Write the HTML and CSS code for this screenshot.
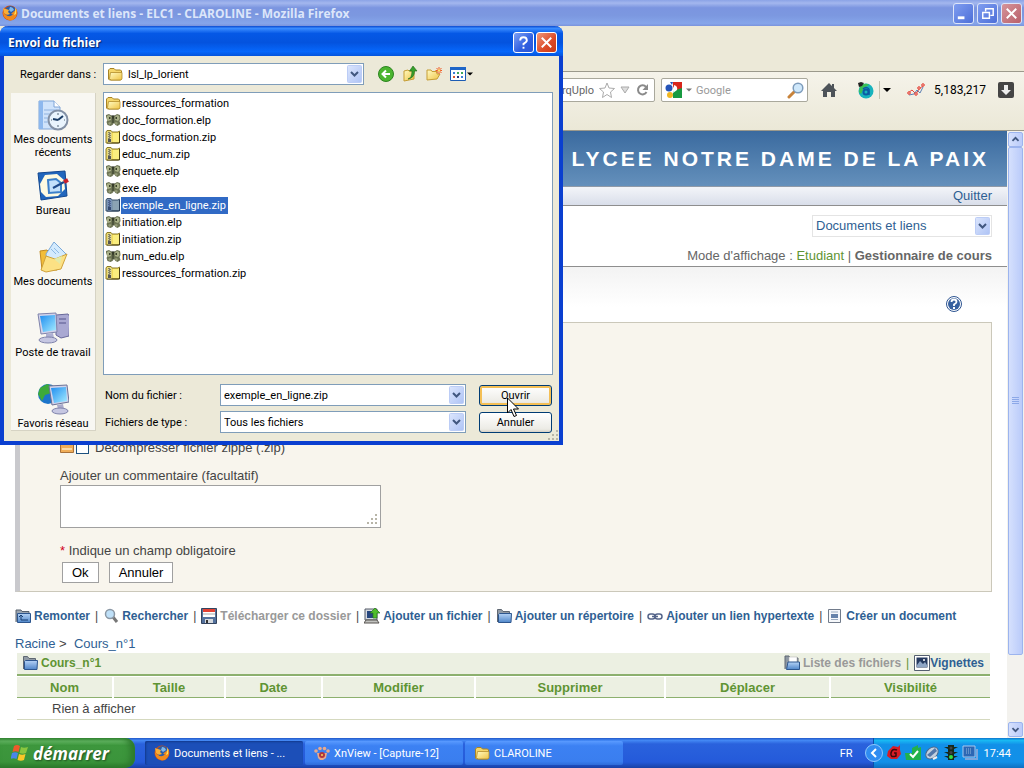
FILE: index.html
```html
<!DOCTYPE html>
<html lang="fr">
<head>
    <meta charset="UTF-8">
    <meta name="viewport" content="width=device-width, initial-scale=1.0">
    <title>Documents et liens - ELC1 - CLAROLINE</title>
    <link rel="stylesheet" href="styles.css">
</head>
<body>

    <!-- Shared icons -->
    <svg class="sprite" width="0" height="0" aria-hidden="true">
        <defs>
            <linearGradient id="gBlue" x1="0" y1="0" x2="0" y2="1"><stop offset="0" stop-color="#b5d3f6"/><stop offset="1" stop-color="#4f86c9"/></linearGradient>
            <linearGradient id="gYellow" x1="0" y1="0" x2="1" y2="1"><stop offset="0" stop-color="#fffbc4"/><stop offset="1" stop-color="#efc343"/></linearGradient>
            <linearGradient id="gScreen" x1="0" y1="0" x2="1" y2="1"><stop offset="0" stop-color="#1f8df0"/><stop offset="1" stop-color="#a5ecff"/></linearGradient>
            <linearGradient id="gArrow" x1="0" y1="0" x2="1" y2="1"><stop offset="0" stop-color="#dce6fd"/><stop offset="1" stop-color="#aec3f5"/></linearGradient>
            <symbol id="firefox" viewBox="0 0 16 16">
                <circle cx="8" cy="8" r="7.500" fill="#c9501a"/>
                <circle cx="8.500" cy="6.500" r="5.500" fill="#2a5ca8"/>
                <path d="M8 2q3 0 4 3l-3 2-2-2z" fill="#7db8ec"/>
                <path d="M1 4q0 5 3 6 4 3 7-1l-2 0 2-2 4-3q1 11-7 11.500-8-1-7-11.500z" fill="#f08a1c"/>
                <path d="M1 3q2 1 3 1l3 1-1 2 2 2q-4 2-6-1z" fill="#f9ae36"/>
                <path d="M13 2q2 3 1 7l-2 1q2-4 1-8z" fill="#ffe25a"/>
            </symbol>
            <symbol id="folder" viewBox="0 0 16 16">
                <path d="M1.500 13V4l1.500-1.500h4L8.500 4h5L14.500 5v8l-1 1h-11z" fill="#f5d66a" stroke="#a88425"/>
                <path d="M3.500 6.500h11.500v6L14 14H4L2.500 12.500z" fill="url(#gYellow)" stroke="#b28d2b" stroke-width=".8"/>
            </symbol>
            <symbol id="zip" viewBox="0 0 16 16">
                <path d="M1 3l1-1.500h4L7 3h6l1.500-1v11l-1 1H1z" fill="#f3dc5c" stroke="#8b7b29"/>
                <path d="M8 4h6v9H8z" fill="#fbee7e"/>
                <path d="M14.500 3v11H2" fill="none" stroke="#463e16"/>
                <path d="M2.500 2.500h4v11h-4z" fill="#d9d49a"/>
                <path d="M4 3v10" stroke="#333" stroke-dasharray="1 1"/>
                <path d="M5 4v9" stroke="#333" stroke-dasharray="1 1"/>
                <path d="M3 10h3v3H3z" fill="#555"/>
            </symbol>
            <symbol id="zip-on" viewBox="0 0 16 16">
                <path d="M1 3l1-1.500h4L7 3h6l1.500-1v11l-1 1H1z" fill="#7c96ac" stroke="#41566e"/>
                <path d="M8 4h6v9H8z" fill="#8ba3b4"/>
                <path d="M14.500 3v11H2" fill="none" stroke="#233751"/>
                <path d="M2.500 2.500h4v11h-4z" fill="#7690bd"/>
                <path d="M4 3v10" stroke="#26395f" stroke-dasharray="1 1"/>
                <path d="M5 4v9" stroke="#26395f" stroke-dasharray="1 1"/>
                <path d="M3 10h3v3H3z" fill="#344a72"/>
            </symbol>
            <symbol id="elp" viewBox="0 0 16 16">
                <path d="M1 3l3-1 3 2h2l3-2 3 1 .500 4-1 2 1 3-3 2-2-1-1.500-2-1.500 2-2 1-3-1-1-3 1-2-1.500-3z" fill="#6d7454"/>
                <path d="M2 4l2-1 2.500 2-.5 3-3 1-1.500-2zM14 4l-2-1-2.500 2 .5 3 3 1 1.500-2z" fill="#a9b087"/>
                <path d="M3 11l2-1 1.500 1-2 2zM13 11l-2-1-1.500 1 2 2z" fill="#979e78"/>
                <path d="M4 5h1.500v2H4zM10.500 5H12v2h-1.500z" fill="#3c422c"/>
                <path d="M7 3l1 4 1-4M8 7v4" stroke="#2f3424" fill="none"/>
            </symbol>
            <symbol id="chevron" viewBox="0 0 15 18">
                <rect x=".5" y=".5" width="14" height="17" rx="1" fill="url(#gArrow)" stroke="#bccdf6"/>
                <path d="M4 7l3.500 3.500L11 7" fill="none" stroke="#41577f" stroke-width="2"/>
            </symbol>
            <symbol id="caret" viewBox="0 0 8 8"><path d="M0 2h8L4 6z"/></symbol>
            <symbol id="dir" viewBox="0 0 16 16">
                <path d="M1.500 14V1.500h4L7 3.500h6.500v3" fill="#909aa5" stroke="#5e6772"/>
                <path d="M2.500 14.500v-8l1-1h12l-.5 9z" fill="url(#gBlue)" stroke="#2d568e"/>
            </symbol>
        </defs>
    </svg>

    <!-- Browser window -->
    <header class="titlebar">
        <svg class="icon16"><use href="#firefox"/></svg>
        <h1>Documents et liens - ELC1 - CLAROLINE - Mozilla Firefox</h1>
        <button class="win-btn" aria-label="Réduire"><svg viewBox="0 0 20 20"><path d="M4 13h7v3H4z" fill="#fff"/></svg></button>
        <button class="win-btn" aria-label="Restaurer"><svg viewBox="0 0 20 20"><path d="M8 8V5h8v7h-3" fill="none" stroke="#fff" stroke-width="1.500"/><path d="M5 9h7v6H5z" fill="none" stroke="#fff" stroke-width="1.500"/></svg></button>
        <button class="win-btn win-close" aria-label="Fermer"><svg viewBox="0 0 20 20"><path d="M5 5l10 10M15 5L5 15" stroke="#fff" stroke-width="2"/></svg></button>
    </header>

    <div class="menu-area"></div>

    <nav class="browser-bar">
        <div class="field url-field">
            <input type="text" aria-label="Adresse" value="rqUplo">
            <svg width="16" height="16" viewBox="0 0 16 16"><path d="M8 1l2 5 5.500.500-4 3.500 1 5.500L8 12.500l-4.500 3 1-5.500-4-3.500L6 6z" fill="#fff" stroke="#aaa"/></svg>
            <svg width="10" height="16" viewBox="0 0 10 16"><path d="M1 5h8l-4 6z" fill="#ddd" stroke="#aaa"/></svg>
            <svg width="14" height="16" viewBox="0 0 14 16"><path d="M11 5a4.500 4.500 0 1 0 .500 5" fill="none" stroke="#8a8a8a" stroke-width="2"/><path d="M13 2v6H7.500z" fill="#8a8a8a"/></svg>
        </div>
        <div class="field search-field">
            <svg width="17" height="16" viewBox="0 0 17 16"><path d="M0 0h8v16H0z" fill="#fff"/><path d="M8 0h9v7l-4 2-5-4z" fill="#d8261c"/><path d="M8 9l9-3v10H8z" fill="#179a40"/><path d="M9 3q4 1 3 5l-4 3z" fill="#fff"/><circle cx="4" cy="6" r="3.500" fill="#2554b8"/><circle cx="5" cy="13" r="3" fill="#f0b621"/><path d="M5 0h3L7 3z" fill="#2554b8"/></svg>
            <svg class="caret" width="6" height="6" fill="#777"><use href="#caret"/></svg>
            <input type="text" aria-label="Recherche" placeholder="Google">
            <svg width="17" height="17" viewBox="0 0 17 17"><path d="M7 10l-5 5" stroke="#c8833a" stroke-width="3" stroke-linecap="round"/><circle cx="11" cy="6" r="4.800" fill="#cfe8fb" stroke="#7e9cbb" stroke-width="1.500"/></svg>
        </div>
        <button class="flat home" aria-label="Accueil"><svg width="16" height="16" viewBox="0 0 16 16"><path d="M8 1L0 9h2v6h4v-5h4v5h4V9h2l-3-3V2h-2v2z" fill="#4d5359"/></svg></button>
        <button class="flat" aria-label="Alexa"><svg width="18" height="18" viewBox="0 0 18 18"><circle cx="10" cy="10" r="7.500" fill="#18b3bd"/><path d="M4 5q6-4 9-1l-5 3-3 6-2-2z" fill="#3cc054"/><path d="M2 2l3-1 3 1-2 3-3 1z" fill="#222"/><circle cx="10" cy="11" r="2.500" fill="none" stroke="#0c5ba4" stroke-width="2"/><path d="M13 8v6M7 8q3-3 6 0" fill="none" stroke="#0c5ba4" stroke-width="1.500"/></svg></button>
        <span class="bar-sep"></span>
        <svg class="caret" width="8" height="8"><use href="#caret"/></svg>
        <svg class="graph" width="18" height="14" viewBox="0 0 18 14"><path d="M1 10l4-3 4 4 3-5 5-4" fill="none" stroke="#e2473c"/><path d="M2 12l5-1 3-4 3 3 3-6" fill="none" stroke="#5d7fb2"/><g fill="#f9b4ac" stroke="#e2473c"><circle cx="2" cy="10" r="1.300"/><circle cx="9" cy="11" r="1.300"/><circle cx="12" cy="5" r="1.300"/><circle cx="16" cy="2" r="1.300"/></g></svg>
        <span class="rank">5,183,217</span>
        <button class="flat" aria-label="Téléchargements"><svg width="16" height="16" viewBox="0 0 16 16"><rect width="16" height="16" rx="2" fill="#454545"/><path d="M6 3h4v5h3l-5 5-5-5h3z" fill="#eee"/></svg></button>
    </nav>

    <div class="viewport">
        <main class="page">
            <div class="banner">LYCEE NOTRE DAME DE LA PAIX</div>
            <div class="user-bar"><a href="#">Quitter</a></div>

            <div class="course-bar">
                <div class="combo tool-select">
                    <select aria-label="Outil"><option>Documents et liens</option></select>
                    <svg class="arrow"><use href="#chevron"/></svg>
                </div>
                <p>Mode d'affichage : <a class="student" href="#">Etudiant</a> | <strong>Gestionnaire de cours</strong></p>
            </div>

            <div class="content">
                <a class="help" href="#" aria-label="Aide"><svg width="16" height="16" viewBox="0 0 16 16"><circle cx="8" cy="8" r="7.500" fill="#fff" stroke="#2d5491"/><circle cx="8" cy="8" r="6" fill="#38619f"/><path d="M5.500 6q0-2.500 2.500-2.500T10.500 6Q10.500 7 8 8.500V10" fill="none" stroke="#fff" stroke-width="1.800"/><path d="M7 11h2v2H7z" fill="#fff"/></svg></a>

                <form class="upload">
                    <div class="unzip">
                        <svg width="14" height="14" viewBox="0 0 14 14"><path d="M.5.500h13v12H.5z" fill="#f0ad58" stroke="#a8713a"/><path d="M2 8h10v2H2z" fill="#fbd9a4"/></svg>
                        <input type="checkbox" id="unzip">
                        <label for="unzip">Décompresser fichier zippé (.zip)</label>
                    </div>
                    <label class="comment-label" for="comment">Ajouter un commentaire (facultatif)</label>
                    <div class="comment-box">
                        <textarea id="comment"></textarea>
                        <svg class="grip" width="12" height="12" viewBox="0 0 12 12"><path d="M9 1h2v2H9zM5 5h2v2H5zM9 5h2v2H9zM1 9h2v2H1zM5 9h2v2H5zM9 9h2v2H9z"/></svg>
                    </div>
                    <p class="required"><span>*</span> Indique un champ obligatoire</p>
                    <div class="form-buttons">
                        <button type="submit">Ok</button>
                        <button type="button">Annuler</button>
                    </div>
                </form>

                <ul class="commands">
                    <li><a href="#"><svg class="icon16" viewBox="0 0 16 16"><path d="M1 14V2h5l1 1.500h7V6" fill="#9aa5b1" stroke="#56606c"/><path d="M2.500 14.500v-9h13v9z" fill="url(#gBlue)" stroke="#2d568e"/><path d="M6 7v5h7M4 9l2-2 2 2" fill="none" stroke="#173d70"/></svg>Remonter</a></li>
                    <li><a href="#"><svg class="icon16" viewBox="0 0 16 16"><path d="M10 9l4 5" stroke="#777" stroke-width="3"/><circle cx="7" cy="6" r="4.500" fill="#bfe0f8" stroke="#8b98a5" stroke-width="1.500"/></svg>Rechercher</a></li>
                    <li><a class="disabled"><svg class="icon16" viewBox="0 0 16 16"><path d="M.5.500h15v15H.5z" fill="#53719d" stroke="#34445e"/><path d="M2 1h12v8H2z" fill="#fff"/><path d="M2 1h12v3H2z" fill="#e34234"/><path d="M2 6h12" stroke="#aaa"/><path d="M4 11h8v4H4z" fill="#d5d9de"/><path d="M5 12h2v3H5z" fill="#333"/></svg>Télécharger ce dossier</a></li>
                    <li><a href="#"><svg class="icon16" viewBox="0 0 16 16"><path d="M1 1h12v11H1z" fill="#d7dae2" stroke="#555b66"/><path d="M3 3h8v7H3z" fill="#27477f"/><path d="M0 15l2-3h11l2 3z" fill="#c1c2bf" stroke="#56534e"/><path d="M11 0l5 5h-3v5H9V5H6z" fill="#50bd2b" stroke="#25751b" stroke-width=".7"/></svg>Ajouter un fichier</a></li>
                    <li><a href="#"><svg class="icon16"><use href="#dir"/></svg>Ajouter un répertoire</a></li>
                    <li><a href="#"><svg class="icon16" viewBox="0 0 16 16"><g fill="none" stroke="#55658a" stroke-width="1.500"><rect x="1" y="6" width="7" height="5" rx="2.500"/><rect x="8" y="6" width="7" height="5" rx="2.500"/><path d="M5 8.500h6"/></g></svg>Ajouter un lien hypertexte</a></li>
                    <li><a href="#"><svg class="icon16" viewBox="0 0 16 16"><path d="M1.500 1.500h12v13h-12z" fill="#f6f8fb" stroke="#717b8b"/><path d="M4 4h7M4 11.500h7" stroke="#9cacc0"/><path d="M4 6h7v4H4z" fill="#6783aa"/></svg>Créer un document</a></li>
                </ul>

                <div class="crumbs"><a href="#">Racine</a> &gt; &nbsp;<a href="#">Cours_n°1</a></div>

                <div class="dir-head">
                    <svg class="icon16"><use href="#dir"/></svg>
                    <h2>Cours_n°1</h2>
                    <svg class="icon16" viewBox="0 0 16 16"><path d="M1 14V1h4l1 2h8v4" fill="#8d97a2" stroke="#5e6772"/><path d="M5 2h8v6H5z" fill="#fff" stroke="#aaa" stroke-width=".5"/><path d="M2.500 14.500L4 7h11.500v7.500z" fill="url(#gBlue)" stroke="#2d568e"/></svg>
                    <span class="disabled">Liste des fichiers</span>
                    <span class="pipe">|</span>
                    <a href="#"><svg class="icon16" viewBox="0 0 16 16"><path d="M.5.500h15v15H.5z" fill="#fff" stroke="#555f70"/><path d="M2.500 2.500h11v10h-11z" fill="#25395f"/><path d="M3 10l3-4 3 3 2-2 2 3v2H3z" fill="#8ea5c5"/><circle cx="10" cy="5" r="1" fill="#fff"/></svg>Vignettes</a>
                </div>
                <table class="files">
                    <colgroup><col class="c-name"><col class="c-size"><col class="c-date"><col class="c-edit"><col class="c-del"><col class="c-move"><col></colgroup>
                    <thead>
                        <tr><th>Nom</th><th>Taille</th><th>Date</th><th>Modifier</th><th>Supprimer</th><th>Déplacer</th><th>Visibilité</th></tr>
                    </thead>
                    <tbody>
                        <tr><td colspan="7">Rien à afficher</td></tr>
                    </tbody>
                </table>
            </div>
        </main>
        <div class="scrollbar">
            <button aria-label="Haut"><svg viewBox="0 0 15 15"><path d="M4 9l3.500-3.500L11 9" fill="none" stroke="#41577f" stroke-width="2"/></svg></button>
            <div class="thumb"><svg width="7" height="8" viewBox="0 0 7 8"><path d="M0 .5h7M0 2.500h7M0 4.500h7M0 6.500h7" stroke="#8ca8e8"/></svg></div>
            <div class="track"></div>
            <button aria-label="Bas"><svg viewBox="0 0 15 15"><path d="M4 6l3.500 3.500L11 6" fill="none" stroke="#41577f" stroke-width="2"/></svg></button>
        </div>
    </div>

    <!-- Taskbar -->
    <footer class="taskbar">
        <button class="start"><svg width="18" height="18" viewBox="0 0 18 18"><path d="M3 2q3-2 6 0L7.500 8q-3-1.500-6 0z" fill="#ee5a2b"/><path d="M10 3q3 1.500 7 0l-2 6q-3 1.500-6.500 0z" fill="#8ac63f"/><path d="M1 9q3-1.500 6 0l-1.500 6q-3-1.500-6 0z" fill="#4a86ea"/><path d="M8 10q3 1.500 6.500 0L13 16q-3 1.500-6.500 0z" fill="#fbc728"/></svg>démarrer</button>
        <button class="task active"><svg class="icon16"><use href="#firefox"/></svg>Documents et liens - ...</button>
        <button class="task"><svg class="icon16" viewBox="0 0 16 16"><g fill="#e8a98c"><circle cx="2" cy="6" r="1.800"/><circle cx="6" cy="3.500" r="1.800"/><circle cx="10.500" cy="3.500" r="1.800"/><circle cx="14" cy="6" r="1.800"/><path d="M3 8h10l-1 5-3 2H6l-2-2z"/></g><circle cx="8" cy="10" r="3" fill="#b1373d"/><circle cx="8" cy="10" r="1" fill="#f5d45c"/></svg>XnView - [Capture-12]</button>
        <button class="task"><svg class="icon16"><use href="#folder"/></svg>CLAROLINE</button>
        <span class="lang">FR</span>
        <div class="tray">
            <button class="flat expand" aria-label="Afficher les icônes"><svg width="18" height="18" viewBox="0 0 18 18"><circle cx="9" cy="9" r="8.500" fill="#2f8cf1" stroke="#8fc8fb"/><path d="M11 5L7 9l4 4" fill="none" stroke="#fff" stroke-width="2"/></svg></button>
            <svg class="icon16" viewBox="0 0 16 16"><path d="M2 6l5-5 5 1 2-2v5l1 4-4 5H5l-4-3z" fill="#d71c24"/><path d="M11 5q-5-2-6 3t5 3v-3H8" fill="none" stroke="#3b0a0c" stroke-width="1.500"/></svg>
            <svg class="icon16" viewBox="0 0 16 16"><path d="M0 8h7V3l6-3v3l3-1v13H1z" fill="#22b14c"/><path d="M5 9l3 3 5-6" fill="none" stroke="#fff" stroke-width="2"/></svg>
            <svg class="icon16" viewBox="0 0 16 16"><ellipse cx="8" cy="8" rx="7" ry="5" transform="rotate(-40 8 8)" fill="#c3d1df" stroke="#4b678b"/><path d="M3 10l8-7 2 3-7 6z" fill="#5277a9"/><path d="M9 14l4-2" stroke="#eee" stroke-width="2"/></svg>
            <svg class="icon16" viewBox="0 0 16 16"><path d="M5 0h6v15H5zM1 2h4v2zM1 7h4v2zM1 11h4v2zM15 2h-4v2zM15 7h-4v2zM15 11h-4v2z" fill="#16291b"/><circle cx="8" cy="3" r="1.500" fill="#444"/><circle cx="8" cy="7.500" r="1.500" fill="#444"/><circle cx="8" cy="12" r="2" fill="#35e243"/></svg>
            <svg class="icon16" viewBox="0 0 16 16"><path d="M1 1h12v11H1z" fill="#2c67b4" stroke="#a7c8ee"/><path d="M3 14h12V4" fill="none" stroke="#7ba6dc" stroke-width="2"/><path d="M4 4h6M4 6h6M4 8h6" stroke="#9bd" stroke-dasharray="1 1"/></svg>
            <span class="clock">17:44</span>
        </div>
    </footer>

    <!-- File dialog -->
    <div class="dialog" role="dialog" aria-labelledby="dialogTitle">
        <div class="dialog-title">
            <h2 id="dialogTitle">Envoi du fichier</h2>
            <button class="win-btn" aria-label="Aide"><svg viewBox="0 0 20 20"><path d="M6.500 8q0-3.500 3.500-3.500T13.500 8q0 1.500-3.500 3.500V13" fill="none" stroke="#fff" stroke-width="2"/><path d="M9 14.500h2v2H9z" fill="#fff"/></svg></button>
            <button class="win-btn win-close" aria-label="Fermer"><svg viewBox="0 0 20 20"><path d="M5 5l10 10M15 5L5 15" stroke="#fff" stroke-width="2"/></svg></button>
        </div>
        <div class="dialog-body">
            <div class="look-in">
                <label for="lookIn">Regarder dans :</label>
                <div class="combo">
                    <svg class="icon16"><use href="#folder"/></svg>
                    <select id="lookIn"><option>lsl_lp_lorient</option></select>
                    <svg class="arrow"><use href="#chevron"/></svg>
                </div>
                <button class="flat" aria-label="Précédent"><svg class="icon16" viewBox="0 0 16 16"><circle cx="8" cy="8" r="7.500" fill="#4bb52f" stroke="#2c8420"/><path d="M12 8H5M8 4.500L4.500 8 8 11.500" fill="none" stroke="#fff" stroke-width="2"/></svg></button>
                <button class="flat" aria-label="Dossier parent"><svg class="icon16" viewBox="0 0 16 16"><path d="M2 15V5l4-1 1 1h5v8z" fill="url(#gYellow)" stroke="#c59d35"/><path d="M6 13q4-1 4-8H7.500L11 0l4 5h-2.500q0 7-6.500 8z" fill="#37a02c" stroke="#1c6a18" stroke-width=".6"/></svg></button>
                <button class="flat" aria-label="Nouveau dossier"><svg class="icon16" viewBox="0 0 16 16"><path d="M1 14V4h4l1 1.500h5V8h3l-3 5z" fill="url(#gYellow)" stroke="#c59d35"/><path d="M13 1v7M9.500 4.500h7M10.500 2l5 5M15.500 2l-5 5" stroke="#ef5a27"/><circle cx="13" cy="4.500" r="1.200" fill="#ffe36a"/></svg></button>
                <button class="flat view" aria-label="Affichage"><svg class="icon16" viewBox="0 0 16 16"><path d="M.5 1.500h15v13H.5z" fill="#fff" stroke="#1c5cb4"/><path d="M0 1h16v3H0z" fill="#1f66c8"/><path d="M3 6h2v2H3zM11 10h2v2h-2z" fill="#3c7fd6"/><path d="M7 6h2v2H7zM11 6h2v2h-2z" fill="#3fa75a"/><path d="M3 10h2v2H3z" fill="#d7562e"/><path d="M7 10h2v2H7z" fill="#26357d"/></svg><svg width="6" height="6"><use href="#caret"/></svg></button>
            </div>

            <div class="dialog-main">
                <ul class="places">
                    <li><svg viewBox="0 0 32 32"><path d="M2 2h15l6 6v22H2z" fill="#cfe3fb" stroke="#7ea4d6"/><path d="M2 2h4v28H2z" fill="#8db8ee"/><path d="M17 2v6h6" fill="#fff" stroke="#7ea4d6"/><path d="M7 11h13M7 15h10M7 19h7M7 23h7" stroke="#8fb2df"/><circle cx="21" cy="21" r="9.500" fill="#e9f4fd" stroke="#8290a5" stroke-width="2"/><path d="M21 21l5-4M21 21l-5-1" stroke="#1b3d66" stroke-width="2"/><path d="M21 14v2M21 26v2M14 21h1M27 21h1" stroke="#567"/></svg><span>Mes documents récents</span></li>
                    <li><svg viewBox="0 0 32 32"><path d="M1 3l27-2 2 25-26 4z" fill="#2166bd" stroke="#12478f"/><path d="M3 14l5-9 12-1 7 6 1 9-7 7-12 1-5-5z" fill="#fffbe1"/><path d="M11 10l8-1 5 4v9l-12 1z" fill="#c3e1fb" stroke="#3c80ca" stroke-width="2"/><path d="M16 18l11-6" stroke="#1e4a8a" stroke-width="2"/><path d="M27 12l4-2" stroke="#c8202a" stroke-width="4"/></svg><span>Bureau</span></li>
                    <li><svg viewBox="0 0 32 32"><path d="M3 10l7-1 2 2 15 1-7 17H5z" fill="#f2bd38" stroke="#c08a22"/><path d="M9 13L17 1l12 12-9 9H10z" fill="#d3eafd" stroke="#79a8d9"/><path d="M14 8l5 5M17 7l5 5" stroke="#8dbbe6"/><path d="M4 29l5-14 9 3 12-5-6 15-15 3z" fill="#fce184" stroke="#cfa13a"/><path d="M17 18l8-3-2 8z" fill="#e3eaa9"/></svg><span>Mes documents</span></li>
                    <li><svg viewBox="0 0 32 32"><path d="M19 3l12-1 2 3-1 19-8 2-5-3z" fill="#a9a8d2" stroke="#68689a"/><path d="M22 7h7M22 11h7" stroke="#55558c"/><path d="M1 2l18-1 1 19-16 2z" fill="#d2d3eb" stroke="#7f83ab"/><path d="M3 4l15-1 1 15-13 2z" fill="url(#gScreen)"/><path d="M9 22l7-1 1 5H9z" fill="#aeb0d2"/><ellipse cx="11" cy="28" rx="9" ry="3" fill="#c6c7e2" stroke="#7f83ab"/></svg><span>Poste de travail</span></li>
                    <li><svg viewBox="0 0 32 32"><circle cx="11" cy="11" r="10" fill="#1c75cb"/><path d="M3 5l7-4 7 3-3 6-6 2-3 6-4-7z" fill="#3daa3b"/><path d="M12 3l18-1 2 17-17 3z" fill="#d2d3eb" stroke="#6c7195"/><path d="M14 5l15-1 1 14-13 2z" fill="url(#gScreen)"/><path d="M20 22l6-1 1 5h-6z" fill="#a9aacb"/><ellipse cx="23" cy="28" rx="8" ry="3" fill="#c6c7e2" stroke="#7f83ab"/></svg><span>Favoris réseau</span></li>
                </ul>

                <div class="dialog-right">
                    <ul class="file-list">
                        <li><svg class="icon16"><use href="#folder"/></svg><span>ressources_formation</span></li>
                        <li><svg class="icon16"><use href="#elp"/></svg><span>doc_formation.elp</span></li>
                        <li><svg class="icon16"><use href="#zip"/></svg><span>docs_formation.zip</span></li>
                        <li><svg class="icon16"><use href="#zip"/></svg><span>educ_num.zip</span></li>
                        <li><svg class="icon16"><use href="#elp"/></svg><span>enquete.elp</span></li>
                        <li><svg class="icon16"><use href="#elp"/></svg><span>exe.elp</span></li>
                        <li class="selected"><svg class="icon16"><use href="#zip-on"/></svg><span>exemple_en_ligne.zip</span></li>
                        <li><svg class="icon16"><use href="#elp"/></svg><span>initiation.elp</span></li>
                        <li><svg class="icon16"><use href="#zip"/></svg><span>initiation.zip</span></li>
                        <li><svg class="icon16"><use href="#elp"/></svg><span>num_edu.elp</span></li>
                        <li><svg class="icon16"><use href="#zip"/></svg><span>ressources_formation.zip</span></li>
                    </ul>
                    <div class="dialog-fields">
                        <label for="fileName">Nom du fichier :</label>
                        <div class="combo">
                            <input type="text" id="fileName" value="exemple_en_ligne.zip">
                            <svg class="arrow"><use href="#chevron"/></svg>
                        </div>
                        <button class="xp-btn default">Ouvrir</button>
                        <label for="fileType">Fichiers de type :</label>
                        <div class="combo">
                            <select id="fileType"><option>Tous les fichiers</option></select>
                            <svg class="arrow"><use href="#chevron"/></svg>
                        </div>
                        <button class="xp-btn">Annuler</button>
                    </div>
                </div>
            </div>
        </div>
        <svg class="grip dialog-grip" width="12" height="12" viewBox="0 0 12 12"><path d="M9 1h2v2H9zM5 5h2v2H5zM9 5h2v2H9zM1 9h2v2H1zM5 9h2v2H5zM9 9h2v2H9z"/></svg>
        <svg class="cursor" width="13" height="21" viewBox="0 0 13 21"><path d="M.5 1v15l3.500-3.500 3 7 2.500-1-3-6.500h5z" fill="#fff" stroke="#000"/></svg>
    </div>

</body>
</html>
```
FILE: styles.css
```css
* {
    margin: 0;
    padding: 0;
    box-sizing: border-box;
}

body {
    font-family: Roboto, "Liberation Sans", sans-serif;
    font-size: 11px;
    color: #000;
    background-color: #fff;
    display: flex;
    flex-direction: column;
    height: 100vh;
    overflow: hidden;
}

ul {
    list-style: none;
}

a {
    color: #2f5f93;
    text-decoration: none;
}

svg {
    display: block;
    flex: none;
}

button, input, select, textarea {
    font: inherit;
    color: inherit;
}

.sprite {
    position: absolute;
}

.icon16 {
    width: 16px;
    height: 16px;
}

.flat {
    border: none;
    background: none;
    display: flex;
    align-items: center;
}

/* Window title bars */
.titlebar {
    display: flex;
    align-items: center;
    gap: 3px;
    height: 26px;
    padding: 0 2px;
    background: linear-gradient(#8ba3e6, #a3b7ee 12%, #7b95e0 30%, #7c98e0 60%, #85a5ea 90%, #7a93dc);
}

.titlebar h1,
.dialog-title h2 {
    flex: 1;
    font-family: "Open Sans", sans-serif;
    font-size: 12px;
    font-weight: bold;
    color: #dce6fa;
}

.win-btn {
    width: 21px;
    height: 21px;
    border: 1px solid #fff;
    border-radius: 3px;
    background: linear-gradient(135deg, #7da0f5, #2f5fe0 60%, #2a55d6);
}

.win-btn svg {
    width: 19px;
    height: 19px;
}

.win-close {
    background: linear-gradient(135deg, #f0977a, #dc4a26 60%, #c93b18);
}

.titlebar .win-btn {
    border-color: #dde5f9;
    background: linear-gradient(135deg, #7f9df0, #4d6fd8);
}

.titlebar .win-close {
    background: linear-gradient(135deg, #d5949a, #b9606a);
}

/* Browser toolbars */
.menu-area {
    height: 46px;
    background-color: #ece9d8;
    border-bottom: 1px solid #9b998c;
}

.browser-bar {
    display: flex;
    align-items: center;
    height: 58px;
    padding: 4px 10px 26px 8px;
    background: linear-gradient(#f5f3ea, #ebe8d7);
}

.field {
    display: flex;
    align-items: center;
    height: 24px;
    background-color: #fff;
    border: 1px solid #a9a89c;
    border-radius: 2px;
}

.field input {
    flex: 1;
    min-width: 0;
    border: none;
    background: none;
    outline: none;
    color: #666;
}

.field input::placeholder {
    color: #999;
}

.url-field {
    flex: 1;
    gap: 5px;
    padding-right: 5px;
}

.url-field input {
    text-align: right;
}

.search-field {
    width: 147px;
    margin-left: 6px;
    padding: 0 3px;
    gap: 4px;
}

.home {
    margin: 0 19px 0 13px;
}

.bar-sep {
    width: 1px;
    height: 18px;
    margin: 0 3px 0 5px;
    background-color: #c4c1b0;
}

.graph {
    margin-left: 16px;
}

.rank {
    margin: 0 12px 0 9px;
    font-size: 12px;
}

/* Page */
.viewport {
    flex: 1;
    min-height: 0;
    display: flex;
    border-top: 1px solid #9b998c;
}

.page {
    flex: 1;
    min-width: 0;
    overflow: hidden;
    font-family: "Liberation Sans", Arial, sans-serif;
    font-size: 13px;
    color: #444;
}

.banner {
    height: 56px;
    padding-right: 18px;
    background: linear-gradient(#3a6a9f, #6490bb);
    border-bottom: 1px solid #8f9aa8;
    color: #fff;
    font-size: 21px;
    font-weight: bold;
    letter-spacing: 3px;
    line-height: 55px;
    text-align: right;
}

.user-bar {
    height: 19px;
    padding-right: 15px;
    background: linear-gradient(#f3f5f9, #d9deea);
    border-bottom: 1px solid #8e8e8e;
    line-height: 18px;
    text-align: right;
}

.course-bar {
    display: flex;
    flex-direction: column;
    align-items: flex-end;
    gap: 10px;
    padding: 9px 15px 1px;
    border-bottom: 1px solid #8e8e8e;
    line-height: 18px;
}

.course-bar p {
    color: #666;
}

.student {
    color: #5f9433;
}

.content {
    padding: 29px 15px 0;
    background: linear-gradient(#f3f3f3, #fff 40px);
}

.help {
    display: block;
    width: 16px;
    margin: 0 30px 10px auto;
}

.upload {
    padding: 116px 42px 8px 40px;
    background-color: #f8f5ed;
    border: 1px solid #cbc8ba;
    border-left: 5px solid #c9c9cd;
}

.unzip {
    display: flex;
    align-items: center;
    height: 16px;
}

.unzip input {
    appearance: none;
    width: 13px;
    height: 13px;
    margin: 0 6px 0 2px;
    background-color: #fff;
    border: 1px solid #1d5180;
}

.comment-label {
    display: block;
    margin-top: 12px;
    line-height: 18px;
}

.comment-box {
    position: relative;
    width: 321px;
}

.comment-box textarea {
    display: block;
    width: 100%;
    height: 43px;
    border: 1px solid #a0a0a0;
    background-color: #fff;
    resize: none;
}

.grip {
    position: absolute;
    right: 3px;
    bottom: 3px;
    fill: #b8b5a8;
}

.required {
    margin-top: 14px;
    line-height: 18px;
}

.required span {
    color: #d0021b;
}

.form-buttons {
    display: flex;
    gap: 10px;
    padding: 2px 2px 0;
}

.form-buttons button {
    height: 21px;
    padding: 0 9px;
    background-color: #fff;
    border: 1px solid #a0a0a0;
    color: #000;
}

/* Document tool */
.commands {
    display: flex;
    align-items: center;
    height: 18px;
    margin-top: 15px;
    white-space: nowrap;
    font-size: 12px;
}

.commands li {
    display: flex;
    align-items: center;
}

.commands li + li::before {
    content: "|";
    margin: 0 5px;
}

.commands a,
.dir-head a {
    display: flex;
    align-items: center;
    gap: 3px;
    font-weight: bold;
}

.commands .disabled,
.dir-head .disabled {
    color: #999;
    font-weight: bold;
}

.crumbs {
    margin-top: 10px;
    line-height: 18px;
}

.dir-head {
    display: flex;
    align-items: center;
    gap: 3px;
    height: 23px;
    margin: 0 2px;
    padding: 0 6px 2px 5px;
    background-color: #ecf0e2;
    border-bottom: 2px solid #8cb06e;
    font-size: 12px;
}

.dir-head h2 {
    flex: 1;
    font-size: 12px;
    color: #5f9433;
}

.dir-head a {
    gap: 0;
}

.pipe {
    margin: 0 2px;
    color: #5f9433;
}

.files {
    width: 100%;
    table-layout: fixed;
    border-collapse: separate;
    border-spacing: 2px 0;
    margin-top: 1px;
}

.c-name { width: 95px; }
.c-size { width: 110px; }
.c-date { width: 95px; }
.c-edit { width: 151px; }
.c-del { width: 188px; }
.c-move { width: 163px; }

.files th {
    height: 21px;
    background-color: #ecf0e2;
    border-bottom: 1px solid #8cb06e;
    color: #5f9433;
}

.files td {
    height: 22px;
    padding-left: 35px;
    border-bottom: 1px solid #d5d9bf;
}

/* Page scroll bar */
.scrollbar {
    display: flex;
    flex-direction: column;
    width: 17px;
    padding: 1px;
    background-color: #f3f2ee;
}

.scrollbar button,
.thumb {
    border: 1px solid #9cb4ee;
    border-radius: 2px;
    background: linear-gradient(90deg, #d5e0fd, #bacbfa);
}

.scrollbar button {
    height: 15px;
}

.scrollbar button svg {
    width: 13px;
    height: 13px;
}

.thumb {
    flex: 507;
    display: flex;
    align-items: center;
    justify-content: center;
}

.track {
    flex: 67;
}

/* Taskbar */
.taskbar {
    display: flex;
    align-items: center;
    gap: 2px;
    height: 30px;
    background: linear-gradient(#2157c8, #4388f4 8%, #2a62dd 20%, #245ada 80%, #1941a5);
    color: #fff;
}

.taskbar button {
    color: #fff;
}

.start {
    display: flex;
    align-items: center;
    gap: 4px;
    width: 135px;
    height: 30px;
    margin-right: 8px;
    padding-left: 11px;
    border: none;
    border-radius: 0 10px 10px 0;
    background: linear-gradient(#358c35, #62b562 10%, #3d973d 25%, #3b943b 80%, #2a7a2a);
    box-shadow: inset -5px 0 6px #2d7a2d;
    font-family: "Open Sans", sans-serif;
    font-size: 17px;
    font-weight: bold;
    font-style: italic;
    text-shadow: 1px 1px 2px #1f4d1f;
}

.task {
    display: flex;
    align-items: center;
    gap: 4px;
    flex: 0 1 158px;
    height: 24px;
    padding-left: 9px;
    border: none;
    border-radius: 2px;
    background: linear-gradient(#5a9bff, #3c81f3 20%, #3a7eef 85%, #2f6cd8);
}

.task.active {
    background: #1c4fb8;
    box-shadow: inset 1px 1px 2px #12398c;
}

.lang {
    margin-left: auto;
    margin-right: 18px;
}

.tray {
    display: flex;
    align-items: center;
    gap: 3px;
    height: 30px;
    padding-right: 13px;
    background: linear-gradient(#0f74cc, #19b9f3 8%, #1290e8 22%, #1190e8 80%, #0e6fc0);
    border-left: 1px solid #0d4fa8;
}

.expand {
    margin-left: -9px;
}

.clock {
    margin-left: 3px;
}

/* Combo boxes */
.combo {
    display: flex;
    align-items: center;
    height: 22px;
    padding: 0 1px 0 3px;
    background-color: #fff;
    border: 1px solid #7f9db9;
}

.combo select,
.combo input {
    flex: 1;
    min-width: 0;
    border: none;
    background: none;
    outline: none;
    appearance: none;
}

.arrow {
    width: 15px;
    height: 18px;
}

.tool-select {
    width: 180px;
    border-color: #e4e4e4;
    color: #2f5f93;
}

/* File dialog */
.dialog {
    position: absolute;
    top: 26px;
    left: 0;
    width: 563px;
    border: 4px solid #0a3fd0;
    border-top: none;
    border-radius: 8px 8px 0 0;
    background-color: #ece9d8;
}

.dialog-title {
    display: flex;
    align-items: center;
    gap: 2px;
    height: 30px;
    margin: 0 -4px;
    padding: 2px 6px 0 8px;
    border-radius: 8px 8px 0 0;
    background: linear-gradient(#0a4ad0, #3a8cff 8%, #0558e6 25%, #0453de 55%, #0667fb 85%, #0454dc);
}

.dialog-title h2 {
    color: #fff;
    text-shadow: 1px 1px 1px #0a246a;
}

.dialog-body {
    padding: 7px 6px 8px 7px;
}

.look-in {
    display: flex;
    align-items: center;
    gap: 8px;
}

.look-in label {
    width: 84px;
    padding-left: 9px;
    white-space: nowrap;
}

.look-in .combo {
    width: 261px;
    margin-right: 6px;
}

.look-in .combo select {
    padding-left: 5px;
}

.view {
    gap: 1px;
}

.dialog-main {
    display: flex;
    align-items: flex-start;
    gap: 7px;
    margin-top: 7px;
}

.places {
    width: 85px;
    margin-top: 1px;
    padding-top: 6px;
    background-color: #f8f7f2;
    border-right: 1px solid #d6d3c4;
    border-bottom: 1px solid #d6d3c4;
}

.places li {
    display: flex;
    flex-direction: column;
    align-items: center;
    gap: 2px;
    height: 71px;
    text-align: center;
    line-height: 13px;
}

.places li:last-child {
    height: 47px;
}

.places svg {
    width: 32px;
    height: 32px;
}

.dialog-right {
    flex: 1;
    display: flex;
    flex-direction: column;
}

.file-list {
    height: 283px;
    padding: 2px 1px;
    background-color: #fff;
    border: 1px solid #7f9db9;
}

.file-list li {
    display: flex;
    height: 17px;
    line-height: 17px;
}

.file-list span {
    padding: 0 2px 0 1px;
}

.file-list .selected span {
    background-color: #316ac5;
    color: #fff;
}

.dialog-fields {
    display: grid;
    grid-template-columns: 113px 1fr 73px;
    column-gap: 2px;
    row-gap: 5px;
    align-items: center;
    margin-top: 9px;
    padding: 0 1px 0 2px;
}

.dialog-fields .combo {
    margin-right: 11px;
}

.xp-btn {
    height: 21px;
    border: 1px solid #003c74;
    border-radius: 3px;
    background: linear-gradient(#fff, #ecebe5 85%, #d6d0c5);
}

.xp-btn.default {
    box-shadow: inset 0 0 0 2px #f4bf55;
}

.dialog-grip {
    right: 0;
    bottom: 0;
}

.cursor {
    position: absolute;
    top: 371px;
    left: 503px;
}
```
